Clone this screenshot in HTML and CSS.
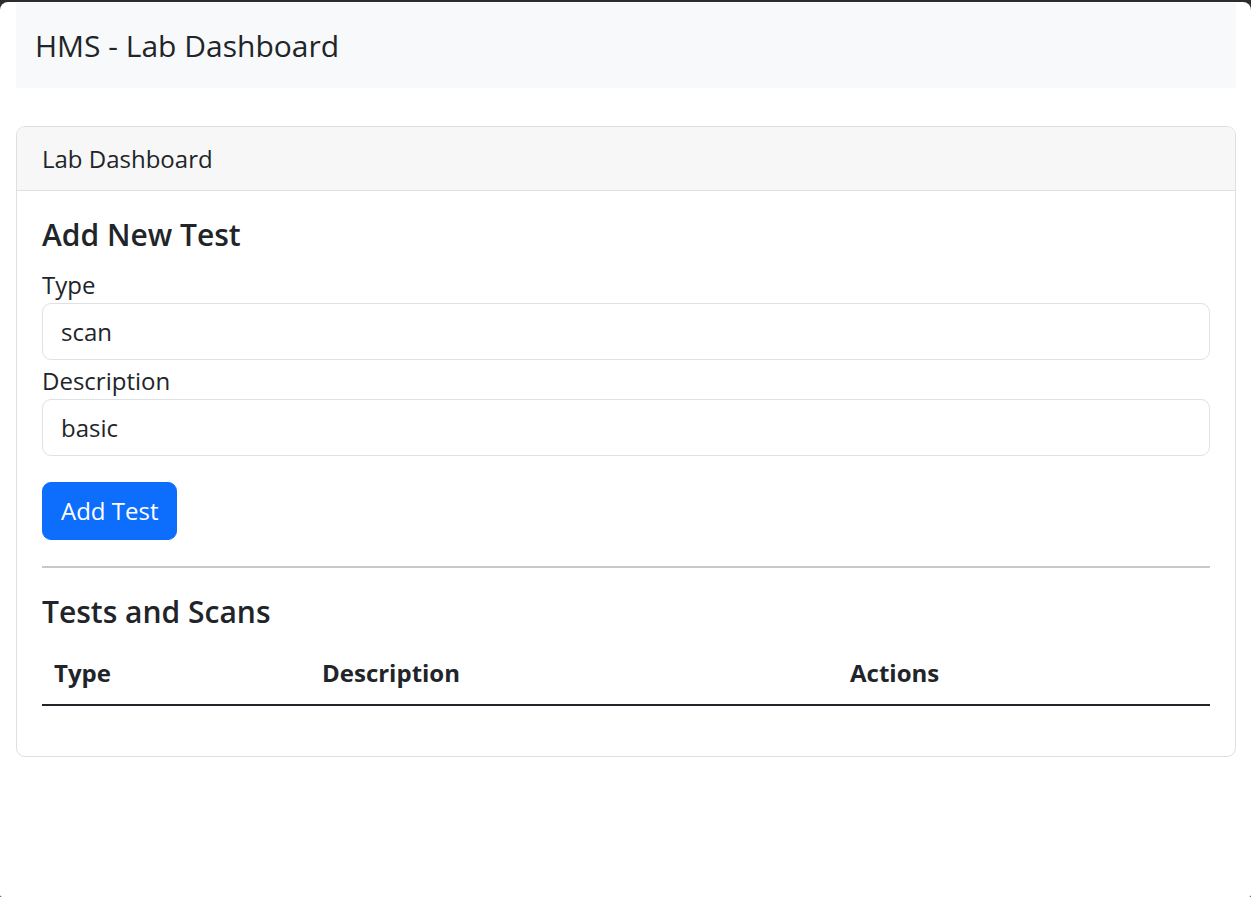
FILE: index.html
```html
<!DOCTYPE html>
<html lang="en">
<head>
<meta charset="utf-8">
<title>HMS - Lab Dashboard</title>
<link rel="stylesheet" href="styles.css">
</head>
<body>
<div class="window">
  <nav class="navbar">
    <span class="brand">HMS - Lab Dashboard</span>
  </nav>
  <section class="card">
    <div class="card-header">Lab Dashboard</div>
    <div class="card-body">
      <h4 class="section-title">Add New Test</h4>
      <form class="test-form">
        <div class="field">
          <label for="type">Type</label>
          <input id="type" class="form-control" type="text" value="scan">
        </div>
        <div class="field">
          <label for="desc">Description</label>
          <input id="desc" class="form-control" type="text" value="basic">
        </div>
        <button type="button" class="btn-primary">Add Test</button>
      </form>
      <hr class="divider">
      <h4 class="section-title">Tests and Scans</h4>
      <table class="table">
        <thead>
          <tr>
            <th class="col-type">Type</th>
            <th class="col-desc">Description</th>
            <th class="col-actions">Actions</th>
          </tr>
        </thead>
        <tbody></tbody>
      </table>
    </div>
  </section>
</div>
</body>
</html>
```
FILE: styles.css
```css
html {
  background: #2d2d2d;
}
body {
  margin: 0;
  padding-top: 2px;
  font-family: "Open Sans", "Noto Sans", sans-serif;
  color: #212529;
}
.window {
  box-sizing: border-box;
  height: 895px;
  background: #ffffff;
  border-radius: 8px 8px 2px 2px;
  padding: 1px 15px 0 16px;
}
.navbar {
  background: #f8f9fa;
  padding: 20px 19px;
}
.brand {
  display: block;
  font-size: 30px;
  line-height: 45px;
}
.card {
  margin-top: 38px;
  border: 1px solid #dfdfdf;
  border-radius: 9px;
  overflow: hidden;
}
.card-header {
  background: #f7f7f7;
  border-bottom: 1px solid #dfdfdf;
  padding: 14px 25px 13px;
  font-size: 24px;
  line-height: 36px;
}
.card-body {
  padding: 26px 25px 26px;
}
.section-title {
  margin: 0 0 11px;
  font-size: 30px;
  line-height: 36px;
  font-weight: 600;
}
.test-form {
  display: flex;
  flex-direction: column;
  align-items: flex-start;
}
.field {
  display: flex;
  flex-direction: column;
  align-self: stretch;
}
.field label {
  font-size: 24px;
  line-height: 36px;
  padding-top: 3px;
}
.form-control {
  box-sizing: border-box;
  width: 100%;
  height: 57px;
  margin: 0;
  padding: 0 18px;
  border: 1px solid #dee2e6;
  border-radius: 9px;
  font-family: inherit;
  font-size: 24px;
  color: #212529;
  background: #fff;
  outline: none;
}
.btn-primary {
  margin-top: 26px;
  box-sizing: border-box;
  height: 58px;
  padding: 0 18px;
  border: 1px solid #0d6efd;
  border-radius: 9px;
  background: #0d6efd;
  color: #ffffff;
  font-family: inherit;
  font-size: 24px;
  line-height: 36px;
}
.divider {
  margin: 26px 0;
  border: 0;
  border-top: 2px solid #c8c8c8;
  height: 0;
}
.table {
  width: 100%;
  margin: 0 0 24px;
  border-collapse: collapse;
  table-layout: fixed;
}
.table th {
  text-align: left;
  font-size: 24px;
  line-height: 36px;
  font-weight: 700;
  padding: 14px 12px 13px;
  border-bottom: 2px solid #212529;
}
.col-type { width: 244px; }
.col-desc { width: 504px; }
.col-actions { width: auto; }
```
